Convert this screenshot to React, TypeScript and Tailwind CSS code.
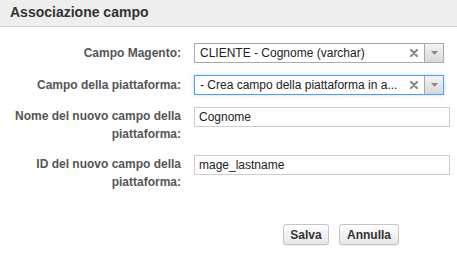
import React from 'react';

function ComboBox({ value, focused }: { value: string; focused?: boolean }) {
  return (
    <div
      className={`flex h-[20px] w-[250px] items-stretch border bg-white ${
        focused ? 'border-[#5897fb] shadow-[0_0_4px_rgba(88,151,251,0.35)]' : 'border-[#aaaaaa]'
      }`}
    >
      <span className="flex-1 overflow-hidden whitespace-nowrap pl-[5px] text-[12px] leading-[18px] text-[#222]">
        {value}
      </span>
      <span className="flex w-[20px] items-center justify-center">
        <svg width="8" height="8" viewBox="0 0 8 8">
          <path d="M1 1l6 6M7 1L1 7" stroke="#8a8a8a" strokeWidth="2.2" strokeLinecap="round" />
        </svg>
      </span>
      <span className="flex w-[19px] items-center justify-center border-l border-[#aaaaaa] bg-gradient-to-b from-[#f4f4f4] to-[#d8d8d8]">
        <svg width="7" height="4" viewBox="0 0 7 4">
          <path d="M0 0h7L3.5 4z" fill="#888" />
        </svg>
      </span>
    </div>
  );
}

function TextField({ value }: { value: string }) {
  return (
    <div className="flex h-[20px] w-[256px] items-center border border-[#cccccc] bg-white pl-[4px] text-[12px] text-[#222]">
      {value}
    </div>
  );
}

function Label({ children }: { children: React.ReactNode }) {
  return (
    <div className="w-[181px] text-right text-[12px] font-bold leading-[18px] text-[#555]">{children}</div>
  );
}

export default function App() {
  return (
    <div className="h-[265px] w-[457px] bg-white font-['Liberation_Sans',Arial,sans-serif]">
      <div className="h-[27px] border-b border-[#cfcfcf] bg-[#eeeeee] pl-[10px] pt-[3px]">
        <h1 className="text-[14px] font-bold leading-[18px] text-[#333]">Associazione campo</h1>
      </div>

      <div className="mt-[16px] flex flex-col gap-[12px]">
        <div className="flex items-center">
          <Label>Campo Magento:</Label>
          <div className="ml-[13px]">
            <ComboBox value="CLIENTE - Cognome (varchar)" />
          </div>
        </div>
        <div className="flex items-center">
          <Label>Campo della piattaforma:</Label>
          <div className="ml-[13px]">
            <ComboBox value="- Crea campo della piattaforma in a..." focused />
          </div>
        </div>
        <div className="flex items-start">
          <Label>
            Nome del nuovo campo della
            <br />
            piattaforma:
          </Label>
          <div className="ml-[13px]">
            <TextField value="Cognome" />
          </div>
        </div>
        <div className="flex items-start">
          <Label>
            ID del nuovo campo della
            <br />
            piattaforma:
          </Label>
          <div className="ml-[13px]">
            <TextField value="mage_lastname" />
          </div>
        </div>
      </div>

      <div className="mt-[33px] flex gap-[10px] pl-[283px]">
        <button className="h-[21px] w-[46px] rounded-[3px] border border-[#c5c5c5] bg-gradient-to-b from-[#ffffff] to-[#e6e6e6] text-[12px] font-bold text-[#333] shadow-[0_1px_1px_rgba(0,0,0,0.08)]">
          Salva
        </button>
        <button className="h-[21px] w-[60px] rounded-[3px] border border-[#c5c5c5] bg-gradient-to-b from-[#ffffff] to-[#e6e6e6] text-[12px] font-bold text-[#333] shadow-[0_1px_1px_rgba(0,0,0,0.08)]">
          Annulla
        </button>
      </div>
    </div>
  );
}
